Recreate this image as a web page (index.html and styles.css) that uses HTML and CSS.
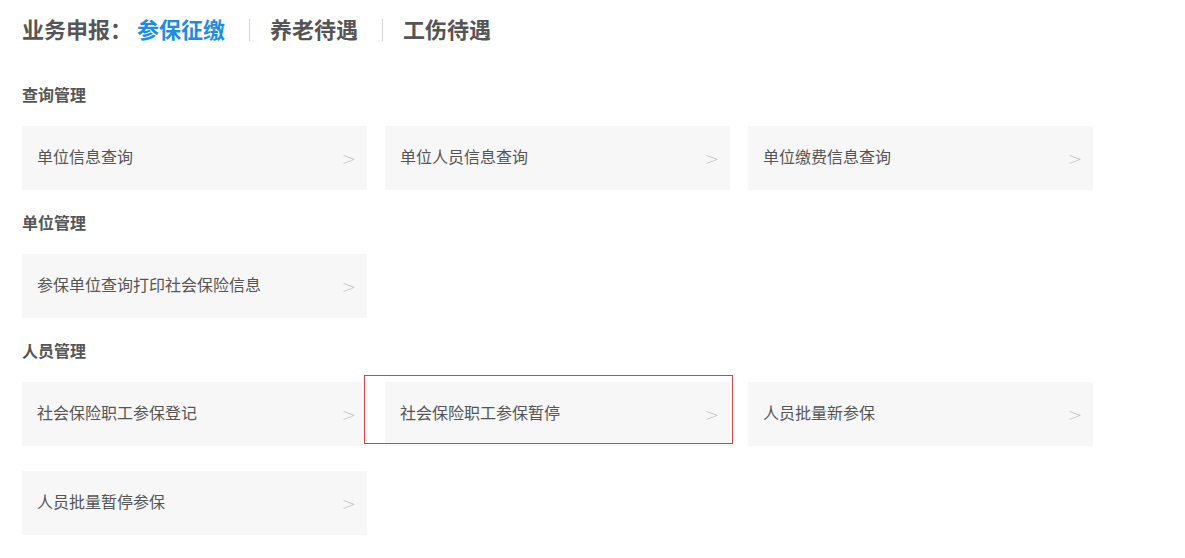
FILE: index.html
```html
<!DOCTYPE html>
<html>

<head>
    <meta charset="utf-8">
    <title>业务申报</title>
    <link rel="stylesheet" href="styles.css">
</head>

<body>
    <div class="page">
        <div class="tabs">
            <span class="tabs-label">业务申报：</span>
            <a class="tab active" href="#">参保征缴</a>
            <span class="tab-sep"></span>
            <a class="tab" href="#">养老待遇</a>
            <span class="tab-sep"></span>
            <a class="tab" href="#">工伤待遇</a>
        </div>

        <div class="section">
            <h3 class="section-title">查询管理</h3>
            <div class="cards">
                <a class="card" href="#"><span>单位信息查询</span><i class="arrow">&gt;</i></a>
                <a class="card" href="#"><span>单位人员信息查询</span><i class="arrow">&gt;</i></a>
                <a class="card" href="#"><span>单位缴费信息查询</span><i class="arrow">&gt;</i></a>
            </div>
        </div>

        <div class="section">
            <h3 class="section-title">单位管理</h3>
            <div class="cards">
                <a class="card" href="#"><span>参保单位查询打印社会保险信息</span><i class="arrow">&gt;</i></a>
            </div>
        </div>

        <div class="section">
            <h3 class="section-title">人员管理</h3>
            <div class="cards">
                <a class="card" href="#"><span>社会保险职工参保登记</span><i class="arrow">&gt;</i></a>
                <a class="card selected" href="#"><span>社会保险职工参保暂停</span><i class="arrow">&gt;</i></a>
                <a class="card" href="#"><span>人员批量新参保</span><i class="arrow">&gt;</i></a>
                <a class="card" href="#"><span>人员批量暂停参保</span><i class="arrow">&gt;</i></a>
            </div>
        </div>
    </div>
</body>

</html>
```

FILE: styles.css
```css
body {
    margin: 0;
    font-family: "Noto Sans CJK SC", "Liberation Sans", sans-serif;
    color: #555;
    background: #fff;
}

.page {
    padding: 10px 22px 0;
}

.tabs {
    display: flex;
    align-items: center;
    box-sizing: border-box;
    height: 40px;
    padding-bottom: 4px;
    font-size: 22px;
    font-weight: bold;
    color: #555;
    margin-bottom: 31px;
}

.tabs-label {
    margin-right: 5px;
}

.tab {
    color: #555;
    text-decoration: none;
}

.tab.active {
    color: #1e8ce0;
}

.tab-sep {
    width: 1px;
    height: 22px;
    margin: 4px 20px 0 24px;
    background-color: #d4d4d4;
}

.section {
    margin-bottom: 19px;
}

.section-title {
    margin: 0 0 15px;
    padding-bottom: 4px;
    font-size: 16px;
    line-height: 26px;
    font-weight: bold;
    color: #555;
}

.cards {
    display: grid;
    grid-template-columns: repeat(3, 345px);
    column-gap: 18px;
    row-gap: 25px;
}

.card {
    position: relative;
    display: flex;
    align-items: center;
    justify-content: space-between;
    height: 64px;
    padding: 0 11px 0 15px;
    background-color: #f7f7f7;
    color: #555;
    font-size: 16px;
    text-decoration: none;
}

.card span {
    padding-bottom: 4px;
}

.arrow {
    font-style: normal;
    font-family: "DejaVu Sans", sans-serif;
    font-weight: 200;
    font-size: 17px;
    color: #c2c2c2;
    margin-top: 1px;
}

.card.selected::after {
    content: "";
    position: absolute;
    left: -21px;
    top: -7px;
    right: -3px;
    bottom: 2px;
    border: 1px solid #d04545;
}
```
